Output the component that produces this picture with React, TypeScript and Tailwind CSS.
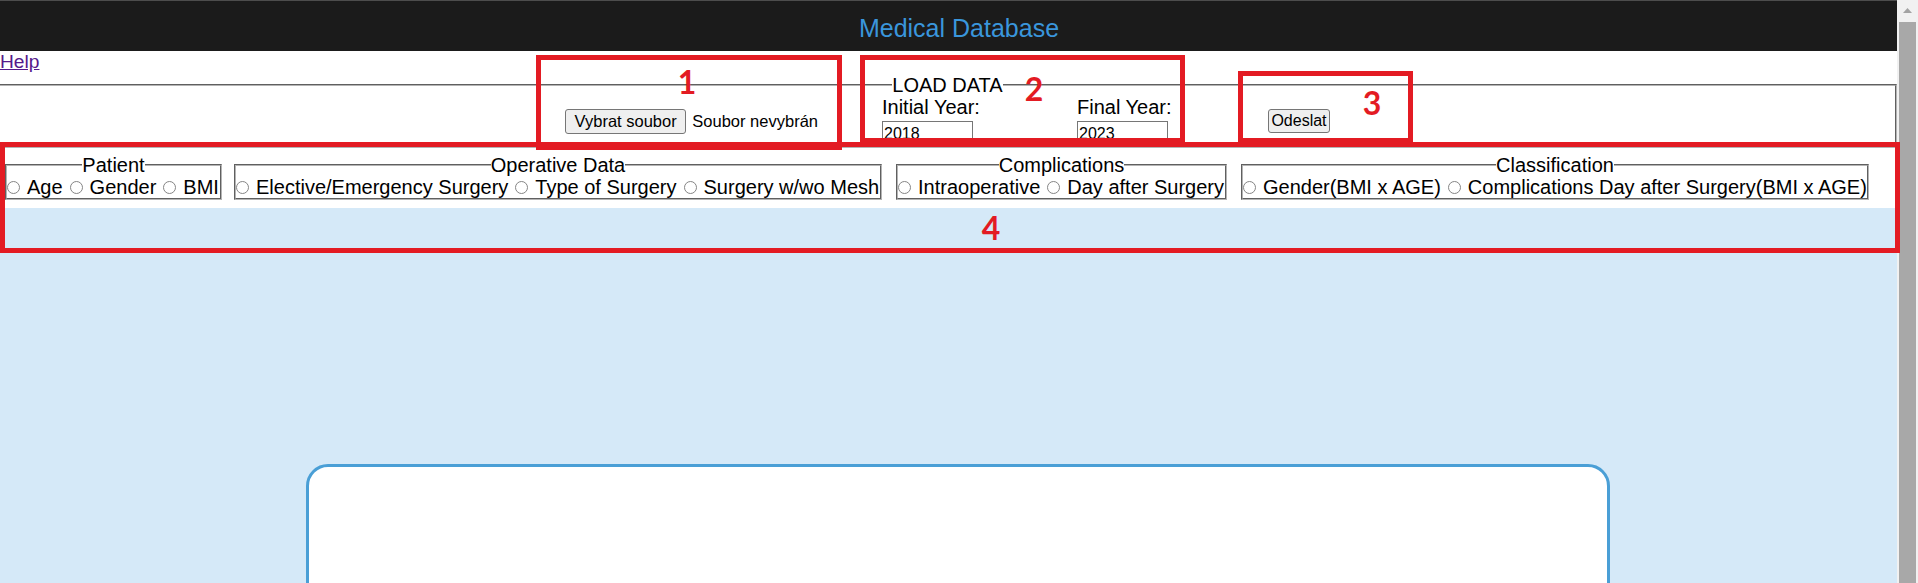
import React from "react";

const Radio = ({ label, first }: { label: string; first?: boolean }) => (
  <span className={first ? "flex items-center" : "ml-[7px] flex items-center"}>
    <span className="inline-block h-[13px] w-[13px] shrink-0 rounded-full border border-[#858585] bg-white" />
    <span className="ml-[7px]">{label}</span>
  </span>
);

const Group = ({
  title,
  items,
  w,
}: {
  title: string;
  items: string[];
  w: string;
}) => (
  <fieldset
    className={`${w} shrink-0 border-2 border-[#b4b4b4] [border-style:groove] text-[20px] leading-[22px]`}
  >
    <legend className="mx-auto">{title}</legend>
    <div className="flex h-[22px] items-center whitespace-nowrap">
      {items.map((it, i) => (
        <Radio key={it} label={it} first={i === 0} />
      ))}
    </div>
  </fieldset>
);

const RedBox = ({ cls }: { cls: string }) => (
  <div className={`pointer-events-none absolute border-[5px] border-[#e31b23] ${cls}`} />
);

const Digit = ({ n, cls }: { n: string; cls: string }) => (
  <div
    className={`pointer-events-none absolute flex h-[40px] w-[40px] items-center justify-center font-['Lato',sans-serif] text-[32px] font-bold leading-none text-[#e31b23] ${cls}`}
  >
    {n}
  </div>
);

export default function App() {
  return (
    <div className="relative flex h-[583px] w-full overflow-hidden bg-white font-['Liberation_Sans',Arial,sans-serif] text-black">
      <div className="flex min-w-0 flex-1 flex-col">
        <header className="h-[51px] shrink-0 border-t border-[#4d4d4d] bg-[#1b1b1b] pl-[21px] pt-[13px] text-center text-[25px] leading-[28px] text-[#3a96dc]">
          Medical Database
        </header>
        <div className="text-[19.2px] leading-[22px]">
          <a href="#" className="text-[#551a8b] underline">
            Help
          </a>
        </div>
        <fieldset className="mt-[1px] border-y-2 border-l-0 border-r-2 border-[#b4b4b4] [border-style:groove] text-[20px] leading-[22px]">
          <legend className="mx-auto">LOAD DATA</legend>
          <div className="flex h-[50px] items-center justify-center">
            <div className="flex w-[253px] items-center whitespace-nowrap">
              <button className="h-[25px] w-[122px] rounded-[3px] border border-[#767676] bg-[#efefef] text-[16.5px] leading-[20px]">
                Vybrat soubor
              </button>
              <span className="ml-[6px] text-[16.5px]">Soubor nevybrán</span>
            </div>
            <div className="ml-[64px] flex w-[96px] flex-col whitespace-nowrap">
              <span>Initial Year:</span>
              <input
                readOnly
                value="2018"
                className="mt-[3px] h-[25px] w-[91px] border border-[#767676] bg-white px-[1px] text-[16px] leading-[20px] outline-none"
              />
            </div>
            <div className="ml-[99px] flex w-[93px] flex-col whitespace-nowrap">
              <span>Final Year:</span>
              <input
                readOnly
                value="2023"
                className="mt-[3px] h-[25px] w-[91px] border border-[#767676] bg-white px-[1px] text-[16px] leading-[20px] outline-none"
              />
            </div>
            <button className="ml-[98px] h-[24px] w-[62px] rounded-[3px] border border-[#767676] bg-[#efefef] text-[16px] leading-[20px]">
              Odeslat
            </button>
          </div>
        </fieldset>
        <div className="mt-[6px] flex pl-[5px]">
          <Group title="Patient" items={["Age", "Gender", "BMI"]} w="w-[217px]" />
          <div className="ml-[12px]">
            <Group
              title="Operative Data"
              items={["Elective/Emergency Surgery", "Type of Surgery", "Surgery w/wo Mesh"]}
              w="w-[648px]"
            />
          </div>
          <div className="ml-[14px]">
            <Group title="Complications" items={["Intraoperative", "Day after Surgery"]} w="w-[331px]" />
          </div>
          <div className="ml-[14px]">
            <Group
              title="Classification"
              items={["Gender(BMI x AGE)", "Complications Day after Surgery(BMI x AGE)"]}
              w="w-[628px]"
            />
          </div>
        </div>
        <div className="mt-[8px] flex-1 bg-[#d5e9f8] pt-[256px]">
          <div className="ml-[306px] h-[300px] w-[1304px] rounded-[22px] border-[3px] border-[#4a9fd6] bg-white" />
        </div>
      </div>
      <div className="flex w-[21px] shrink-0 flex-col bg-[#f1f1f1]">
        <div className="flex h-[22px] items-center justify-center">
          <svg width="9" height="6" viewBox="0 0 9 6">
            <polygon points="4.5,0 9,5 0,5" fill="#a3a3a3" />
          </svg>
        </div>
        <div className="mx-[2px] flex-1 bg-[#a8a8a8]" />
      </div>

      <RedBox cls="left-[536px] top-[55px] h-[95px] w-[306px]" />
      <RedBox cls="left-[860px] top-[55px] h-[88px] w-[325px]" />
      <RedBox cls="left-[1238px] top-[71px] h-[72px] w-[175px]" />
      <RedBox cls="left-0 top-[142px] h-[111px] w-[1900px]" />
      <Digit n="1" cls="left-[667px] top-[62px]" />
      <Digit n="2" cls="left-[1014px] top-[69px]" />
      <Digit n="3" cls="left-[1352px] top-[83px]" />
      <Digit n="4" cls="left-[971px] top-[208px]" />
    </div>
  );
}
